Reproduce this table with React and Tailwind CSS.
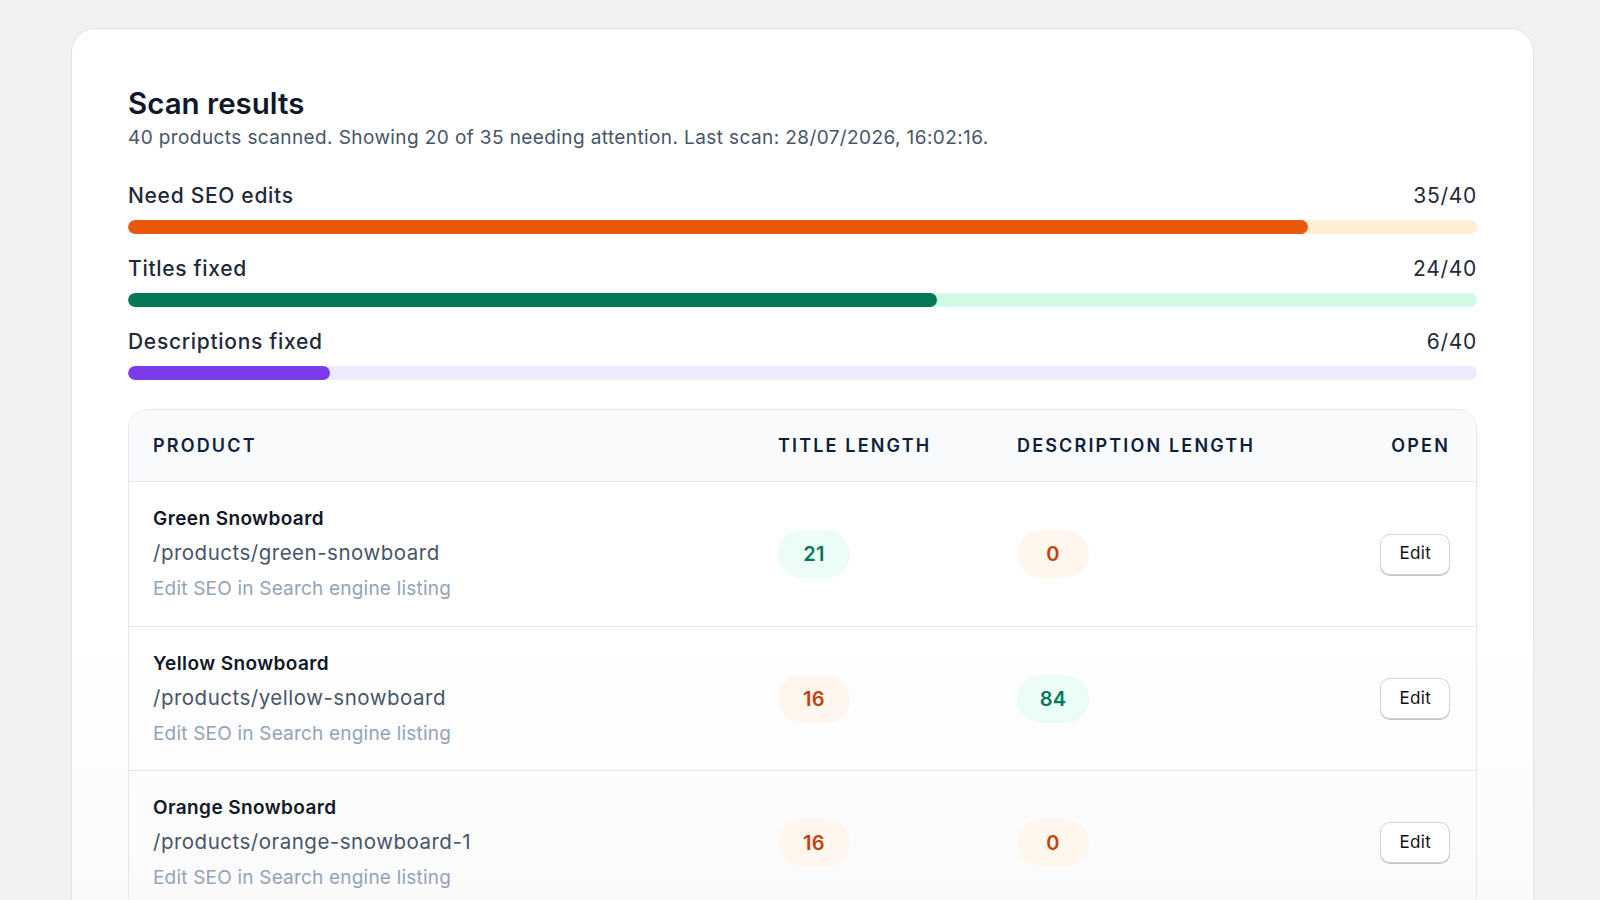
import React from "react";

const bars = [
  { label: "Need SEO edits", value: 35, total: 40, fill: "bg-[#ea580c]", track: "bg-[#ffedd5]" },
  { label: "Titles fixed", value: 24, total: 40, fill: "bg-[#047857]", track: "bg-[#d1fae5]" },
  { label: "Descriptions fixed", value: 6, total: 40, fill: "bg-[#7c3aed]", track: "bg-[#ede9fe]" },
];

const rows = [
  { name: "Green Snowboard", path: "/products/green-snowboard", title: 21, titleOk: true, desc: 0, descOk: false },
  { name: "Yellow Snowboard", path: "/products/yellow-snowboard", title: 16, titleOk: false, desc: 84, descOk: true },
  { name: "Orange Snowboard", path: "/products/orange-snowboard-1", title: 16, titleOk: false, desc: 0, descOk: false },
];

function Badge({ value, ok }) {
  return (
    <span
      className={
        "inline-flex h-12 w-[72px] items-center justify-center rounded-full text-[20px] font-semibold tracking-[0.3px] " +
        (ok ? "bg-[#ecfdf5] text-[#047857]" : "bg-[#fff7ed] text-[#c2410c]")
      }
    >
      {value}
    </span>
  );
}

export default function App() {
  return (
    <div className="h-[900px] overflow-hidden bg-[#f1f1f1] font-[Inter,sans-serif]">
      <div className="ml-[71px] mt-[28px] w-[1463px] rounded-[24px] border border-[#e3e3e3] bg-[linear-gradient(to_bottom,#ffffff_600px,#fafafb_880px)] px-14 pt-14 pb-10">
        <h1 className="text-[29.5px] font-semibold leading-9 text-[#0f172a]">Scan results</h1>
        <p className="mt-[3px] text-[19px] leading-7 tracking-[0.4px] text-[#475569]">
          40 products scanned. Showing 20 of 35 needing attention. Last scan: 28/07/2026, 16:02:16.
        </p>

        <div className="mt-[30px] flex flex-col gap-[21px]">
          {bars.map((b) => (
            <div key={b.label}>
              <div className="flex items-center justify-between text-[21px] leading-7 tracking-[0.7px] text-[#1e293b]">
                <span className="font-medium">{b.label}</span>
                <span>
                  {b.value}/{b.total}
                </span>
              </div>
              <div className={"mt-[10px] h-[14px] w-full overflow-hidden rounded-full " + b.track}>
                <div
                  className={"h-full rounded-full " + b.fill}
                  style={{ width: `${(b.value / b.total) * 100}%` }}
                />
              </div>
            </div>
          ))}
        </div>

        <div className="mt-[29px] overflow-hidden rounded-[20px] border border-[#e2e8f0]">
          <div className="grid h-[72px] grid-cols-[625px_239px_1fr_auto] items-center border-b border-[#e2e8f0] bg-[#f8fafc] pl-6 pr-[26px] text-[18px] font-semibold uppercase tracking-[0.12em] text-[#0f1f3a]">
            <div>Product</div>
            <div>Title length</div>
            <div>Description length</div>
            <div className="text-right">Open</div>
          </div>
          {rows.map((r, i) => (
            <div
              key={r.name}
              className={
                "grid h-[144px] grid-cols-[625px_239px_1fr_auto] items-center pl-6 pr-[26px] " +
                (i > 0 ? "border-t border-[#e2e8f0]" : "")
              }
            >
              <div className="flex flex-col">
                <div className="text-[19px] font-semibold leading-7 tracking-[0.4px] text-[#111827]">{r.name}</div>
                <div className="mt-[4px] text-[20.5px] leading-8 tracking-[0.5px] text-[#475569]">{r.path}</div>
                <div className="mt-[6px] text-[19px] leading-7 tracking-[0.2px] text-[#94a3b8]">
                  Edit SEO in Search engine listing
                </div>
              </div>
              <div>
                <Badge value={r.title} ok={r.titleOk} />
              </div>
              <div>
                <Badge value={r.desc} ok={r.descOk} />
              </div>
              <div className="flex justify-end">
                <button className="h-[41px] rounded-[10px] border border-[#d4d4d4] bg-white px-[18px] text-[17px] tracking-[0.3px] text-[#111111] shadow-[0_1px_0_#c4c4c4]">
                  Edit
                </button>
              </div>
            </div>
          ))}
        </div>
      </div>
    </div>
  );
}
